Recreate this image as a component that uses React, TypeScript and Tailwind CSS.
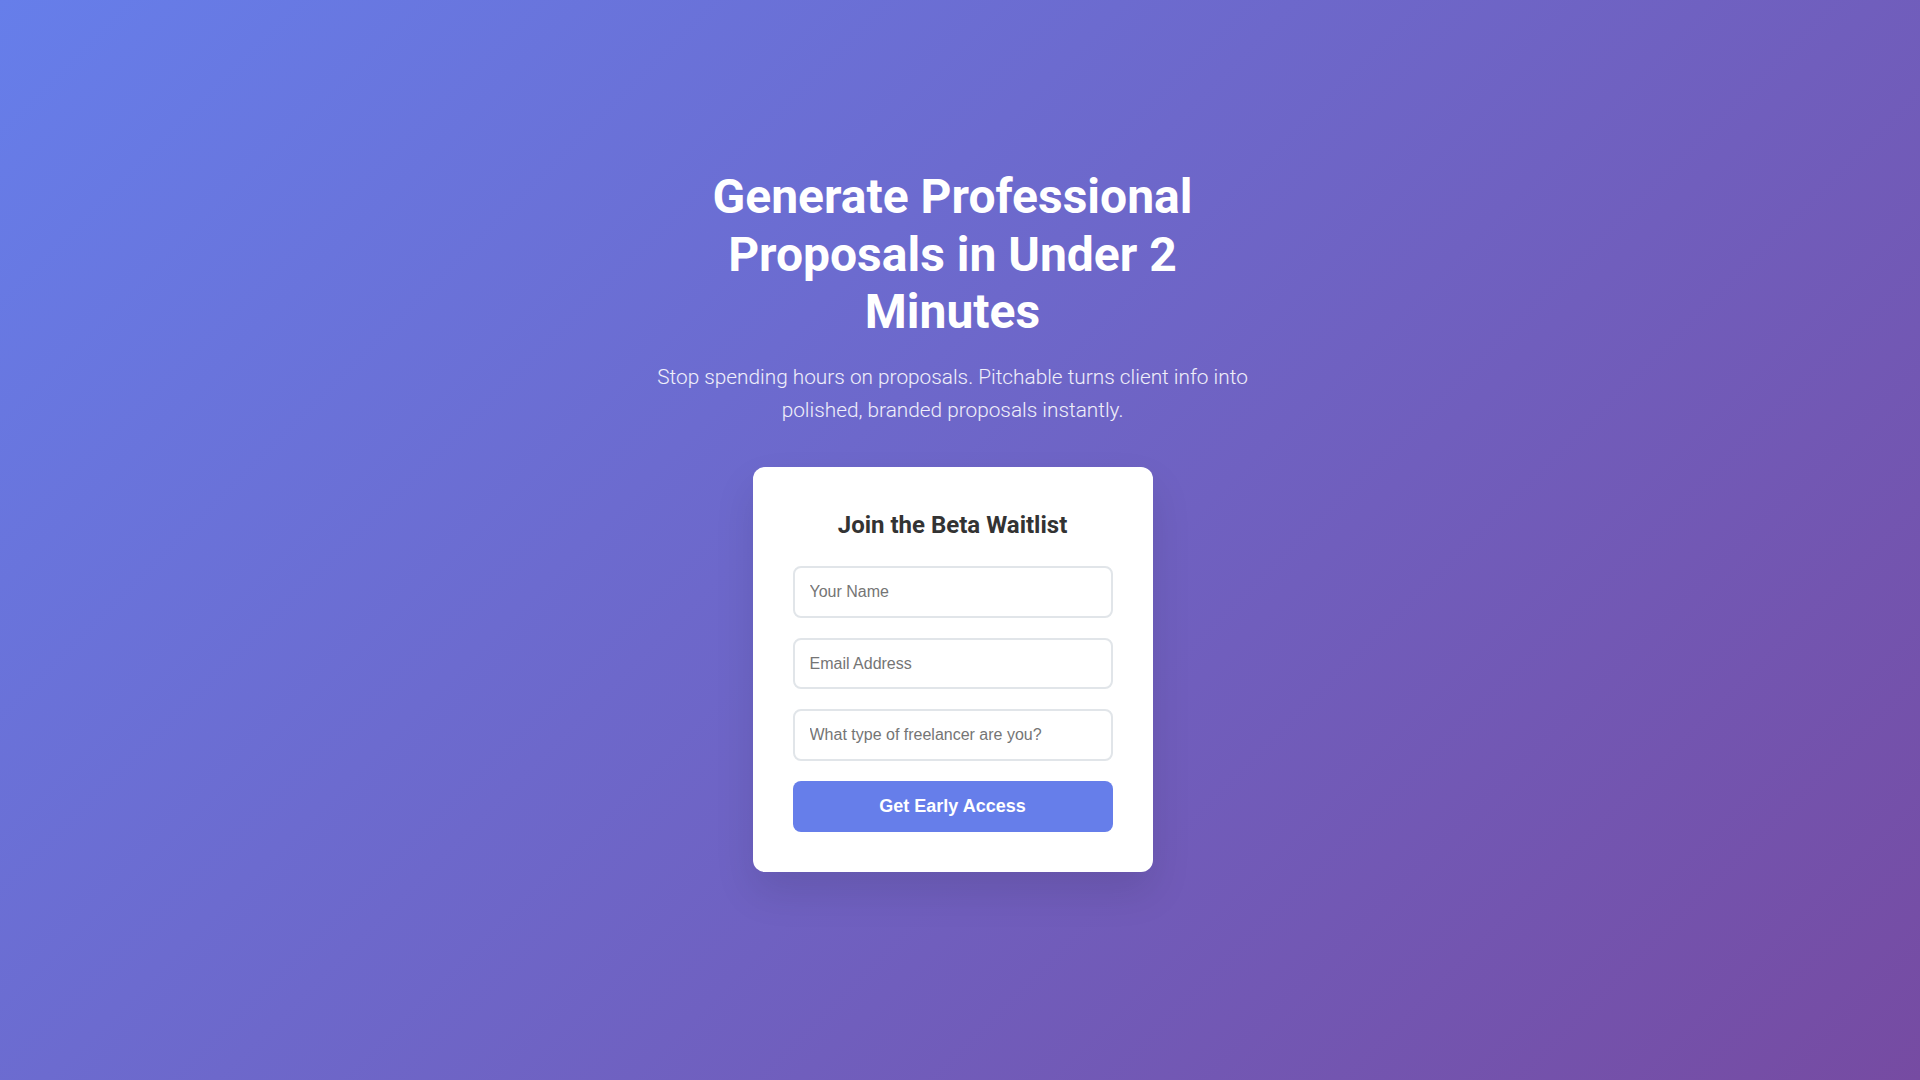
import { useState } from 'react';

export default function App() {
  const [name, setName] = useState('');
  const [email, setEmail] = useState('');
  const [kind, setKind] = useState('');

  const inputClass =
    "block w-full h-[51.5px] px-[15px] mb-5 border-2 border-[#e1e5e9] rounded-lg bg-white text-base text-[#333] font-['Liberation_Sans',Arial,sans-serif] placeholder:text-[#757575] outline-none focus:border-[#667eea]";

  return (
    <div className="min-h-[2400px] bg-fixed bg-[linear-gradient(135deg,#667eea_0%,#764ba2_100%)] font-['Roboto','Liberation_Sans',sans-serif] text-white">
      <section className="h-screen flex flex-col items-center justify-center pb-10 pl-5 pr-[35px]">
        <div className="w-full max-w-[600px] text-center">
          <h1 className="text-[48px] leading-[1.2] font-bold mb-5">
            Generate Professional Proposals in Under 2 Minutes
          </h1>
          <p className="text-[20.8px] leading-[1.6] font-light text-white/90 mb-10">
            Stop spending hours on proposals. Pitchable turns client info into polished, branded proposals instantly.
          </p>
        </div>

        <div className="w-[400px] bg-white rounded-xl p-10 shadow-[0_20px_40px_rgba(0,0,0,0.1)]">
          <h3 className="text-2xl leading-[1.5] font-bold text-[#333] text-center mb-[23px]">Join the Beta Waitlist</h3>
          <form onSubmit={(e) => e.preventDefault()}>
            <input
              type="text"
              placeholder="Your Name"
              value={name}
              onChange={(e) => setName(e.target.value)}
              className={inputClass}
            />
            <input
              type="email"
              placeholder="Email Address"
              value={email}
              onChange={(e) => setEmail(e.target.value)}
              className={inputClass}
            />
            <input
              type="text"
              placeholder="What type of freelancer are you?"
              value={kind}
              onChange={(e) => setKind(e.target.value)}
              className={inputClass}
            />
            <button
              type="submit"
              className="block w-full h-[51px] rounded-lg bg-[#667eea] text-white text-lg font-bold font-['Liberation_Sans',Arial,sans-serif] hover:bg-[#5a6fd8] transition-colors"
            >
              Get Early Access
            </button>
          </form>
        </div>
      </section>
    </div>
  );
}
